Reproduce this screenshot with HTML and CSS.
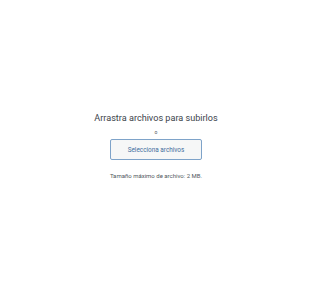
FILE: index.html
```html
<!DOCTYPE html>
<html lang="es">
<head>
<meta charset="utf-8">
<link rel="stylesheet" href="styles.css">
</head>
<body>
<div class="page">
  <div class="drop-area">
    <h2 class="instructions">Arrastra archivos para subirlos</h2>
    <p class="or">o</p>
    <button class="select-btn" type="button">Selecciona archivos</button>
    <p class="max-size">Tamaño máximo de archivo: 2 MB.</p>
  </div>
</div>
</body>
</html>
```
FILE: styles.css
```css
html, body {
  margin: 0;
  padding: 0;
  background: #ffffff;
}
body {
  font-family: Roboto, "Noto Sans", "Liberation Sans", sans-serif;
  width: 300px;
  height: 300px;
}
.page {
  height: 300px;
  display: flex;
  justify-content: center;
  padding: 112px 0 0 12px;
  box-sizing: border-box;
}
.drop-area {
  display: flex;
  flex-direction: column;
  align-items: center;
}
.instructions {
  margin: 0;
  font-size: 9.1px;
  font-weight: 400;
  line-height: 12px;
  color: #3c434a;
}
.or {
  margin: 4px 0 0;
  font-size: 5px;
  line-height: 8px;
  color: #50575e;
}
.select-btn {
  margin-top: 3px;
  width: 92px;
  height: 21px;
  padding: 0;
  font-family: inherit;
  font-size: 6.4px;
  color: #3f6d9c;
  background: #f6f7f7;
  border: 1px solid #7ea3c9;
  border-radius: 2px;
}
.max-size {
  margin: 12px 0 0;
  font-size: 6px;
  line-height: 8px;
  color: #50575e;
}
```
